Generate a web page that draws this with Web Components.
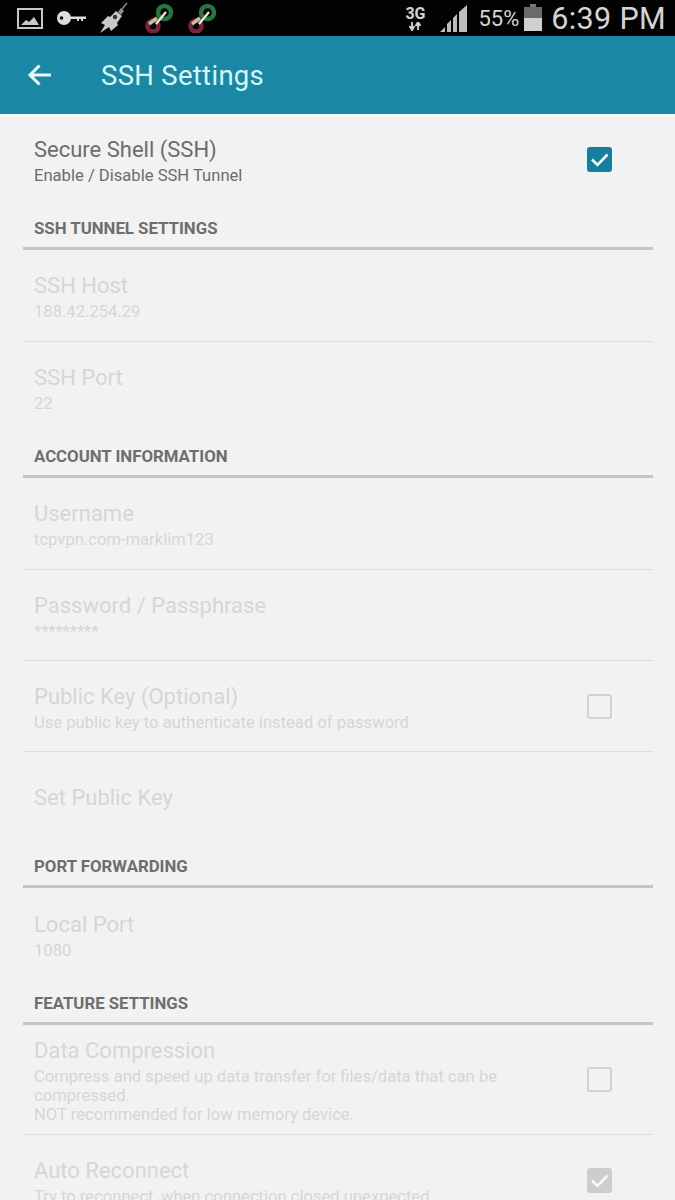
<!DOCTYPE html>
<html>
<head>
<meta charset="utf-8">
<style>
  html, body { margin: 0; padding: 0; background: #f2f2f2; }
  body { width: 675px; height: 1200px; overflow: hidden; font-family: Roboto, "Liberation Sans", sans-serif; }
</style>
</head>
<body>
<status-bar></status-bar>
<app-toolbar title="SSH Settings"></app-toolbar>
<pref-item title="Secure Shell (SSH)" summary="Enable / Disable SSH Tunnel" check="on"></pref-item>
<pref-category label="SSH TUNNEL SETTINGS"></pref-category>
<pref-item disabled divider height="92" title="SSH Host" summary="188.42.254.29"></pref-item>
<pref-item disabled title="SSH Port" summary="22"></pref-item>
<pref-category label="ACCOUNT INFORMATION"></pref-category>
<pref-item disabled divider height="92" title="Username" summary="tcpvpn.com-marklim123"></pref-item>
<pref-item disabled divider title="Password / Passphrase" summary="*********"></pref-item>
<pref-item disabled divider title="Public Key (Optional)" summary="Use public key to authenticate instead of password" check="off"></pref-item>
<pref-item disabled title="Set Public Key"></pref-item>
<pref-category label="PORT FORWARDING"></pref-category>
<pref-item disabled height="92" title="Local Port" summary="1080"></pref-item>
<pref-category label="FEATURE SETTINGS"></pref-category>
<pref-item disabled divider title="Data Compression" check="off" height="110" summary="Compress and speed up data transfer for files/data that can be compressed.&#10;NOT recommended for low memory device."></pref-item>
<pref-item disabled title="Auto Reconnect" summary="Try to reconnect, when connection closed unexpected" check="on"></pref-item>

<script>
class StatusBar extends HTMLElement {
  constructor() {
    super();
    this.shadowDOM = this.attachShadow({mode: 'open'});
  }
  connectedCallback() {
    const link = `
      <svg class="soft" width="30" height="30" viewBox="0 0 30 30">
        <circle cx="20.500" cy="9.500" r="6.500" fill="none" stroke="#27753f" stroke-width="4.500"/>
        <circle cx="9" cy="23" r="5.500" fill="none" stroke="#7c2140" stroke-width="4.500"/>
        <path d="M5 21 L13 15" stroke="#c9bf98" stroke-width="3.500"/>
        <path d="M12 21 L22 9" stroke="#eeeede" stroke-width="2.200"/>
      </svg>`;
    this.shadowDOM.innerHTML = `
    <style>
    :host {
      display: flex;
      align-items: center;
      height: 36px;
      background: #030303;
      color: #d4d4d4;
      font-family: Roboto, "Liberation Sans", sans-serif;
    }
    .left { display: flex; align-items: center; gap: 13px; padding-left: 16px; flex: 1; }
    .right { display: flex; align-items: center; padding-right: 9px; }
    .net { display: flex; flex-direction: column; align-items: center; width: 24px; margin-right: 13px; font-size: 16px; font-weight: 700; line-height: 17px; }
    .pct { font-size: 22px; margin: 0 4px 0 10px; }
    .time { font-size: 30.500px; margin-left: 8px; letter-spacing: .35px; }
    svg { display: block; }
    .soft { filter: blur(.5px); }
    </style>
    <div class="left">
      <svg class="soft" width="28" height="24" viewBox="0 0 28 24">
        <rect x="2" y="3" width="24" height="19" fill="none" stroke="#c8c8c8" stroke-width="2"/>
        <path d="M5 19 L10 14 L13 16 L18 11 L23 19 Z" fill="#c8c8c8"/>
      </svg>
      <svg class="soft" width="32" height="20" viewBox="0 0 32 20" style="margin-left:-1px">
        <circle cx="8" cy="10" r="7" fill="#dcdcdc"/>
        <circle cx="5.500" cy="10" r="1.800" fill="#111"/>
        <path d="M13 8.500 H30 V11 H27 V13 H25 V11 H23 V13 H21 V11 H13 Z" fill="#dcdcdc"/>
      </svg>
      <svg class="soft" width="30" height="32" viewBox="0 0 30 32" style="margin-left:-3px">
        <path d="M2 31 L7 23 L3 21 L10 14 L12 15 L18 9 L24 14 L19 21 L20 23 L13 29 L11 25 Z" fill="#c8c8c8"/>
        <path d="M20 10 L23 6 L26 9 L23 13 Z" fill="#8e8e8e"/>
        <path d="M24 7 L29 1" stroke="#8a8a8a" stroke-width="1.500"/>
        <circle cx="17" cy="15" r="2.200" fill="#333"/>
      </svg>
      <span style="display:flex;gap:13px;margin-left:3px">${link}${link}</span>
    </div>
    <div class="right">
      <div class="net"><span>3G</span>
        <svg width="16" height="9" viewBox="0 0 16 9"><path d="M5 0 V6 M2.500 4 L5 8 L7.500 4 M11 8 V2 M8.500 4 L11 0 L13.500 4" fill="none" stroke="#d4d4d4" stroke-width="1.800"/></svg>
      </div>
      <svg class="soft" width="28" height="30" viewBox="0 0 28 30">
        <path d="M0 29 L5 24 V29 Z M7 29 V21 L11 17 V29 Z M13 29 V15 L17 11 V29 Z M19 29 V9 L27 2 V29 Z" fill="#bdbdbd"/>
      </svg>
      <span class="pct">55%</span>
      <svg class="soft" width="20" height="28" viewBox="0 0 20 28">
        <rect x="7" y="0" width="6" height="4" fill="#777"/>
        <rect x="1" y="3" width="18" height="11" fill="#6a6a6a"/>
        <rect x="1" y="14" width="18" height="13" fill="#d0d0d0"/>
      </svg>
      <span class="time">6:39 PM</span>
    </div>
    `;
  }
}

class AppToolbar extends HTMLElement {
  constructor() {
    super();
    this.shadowDOM = this.attachShadow({mode: 'open'});
  }
  connectedCallback() {
    this.shadowDOM.innerHTML = `
    <style>
    :host {
      display: flex;
      align-items: center;
      height: 78px;
      background: #1a88a4;
      color: #d6f6f6;
      font-family: Roboto, "Liberation Sans", sans-serif;
      border-bottom: 2px solid #f9ffff;
      margin-bottom: -2px;
    }
    svg { margin-left: 27px; display: block; }
    span { margin-left: 49px; font-size: 27.500px; letter-spacing: .3px; }
    </style>
    <svg width="25" height="24" viewBox="0 0 25 24">
      <path d="M24 12 H3 M12.500 2.500 L3 12 L12.500 21.500" fill="none" stroke="#e6fbfb" stroke-width="3"/>
    </svg>
    <span>${this.getAttribute('title')}</span>
    `;
  }
}

class PrefCategory extends HTMLElement {
  constructor() {
    super();
    this.shadowDOM = this.attachShadow({mode: 'open'});
  }
  connectedCallback() {
    this.shadowDOM.innerHTML = `
    <style>
    :host {
      display: block;
      margin: 0 22px 0 23px;
      height: 45px;
      box-sizing: border-box;
      padding: 13px 0 0 11px;
      border-bottom: 3px solid #c4c4c4;
      color: #6e6e6e;
      font-family: Roboto, "Liberation Sans", sans-serif;
      font-size: 16.800px;
      font-weight: 700;
      line-height: 20px;
    }
    </style>
    ${this.getAttribute('label')}
    `;
  }
}

class PrefItem extends HTMLElement {
  constructor() {
    super();
    this.shadowDOM = this.attachShadow({mode: 'open'});
  }
  connectedCallback() {
    const summary = this.getAttribute('summary');
    const check = this.getAttribute('check');
    const height = this.getAttribute('height') || '91';
    this.shadowDOM.innerHTML = `
    <style>
    :host {
      display: flex;
      align-items: center;
      margin: 0 22px 0 23px;
      padding-left: 11px;
      box-sizing: border-box;
      height: ${height}px;
      font-family: Roboto, "Liberation Sans", sans-serif;
      color: #6c6c6c;
    }
    :host([divider]) { border-bottom: 1px solid #dedede; }
    :host([disabled]) { color: #d6d6d6; }
    .text { flex: 1; min-width: 0; max-width: 495px; padding-top: 1px; }
    .title { font-size: 22px; line-height: 30px; }
    .summary { font-size: 16.600px; line-height: 19px; margin-top: 1px; white-space: pre-line; }
    .box { width: 25px; height: 25px; box-sizing: border-box; border-radius: 3px; margin: 0 41px 0 auto; }
    .on { background: #147f9f; }
    :host([disabled]) .on { background: #cdcdcd; }
    .off { border: 2px solid #d2d2d2; }
    svg { display: block; }
    </style>
    <div class="text">
      <div class="title">${this.getAttribute('title')}</div>
      ${summary ? `<div class="summary">${summary}</div>` : ''}
    </div>
    ${check ? `<div class="box ${check}">${check === 'on' ? `<svg width="25" height="25" viewBox="0 0 25 25"><path d="M5 12.500 L10.500 18 L20.500 7.500" fill="none" stroke="#f2fbfb" stroke-width="2.600"/></svg>` : ''}</div>` : ''}
    `;
  }
}

customElements.define('status-bar', StatusBar);
customElements.define('app-toolbar', AppToolbar);
customElements.define('pref-category', PrefCategory);
customElements.define('pref-item', PrefItem);
</script>
</body>
</html>
